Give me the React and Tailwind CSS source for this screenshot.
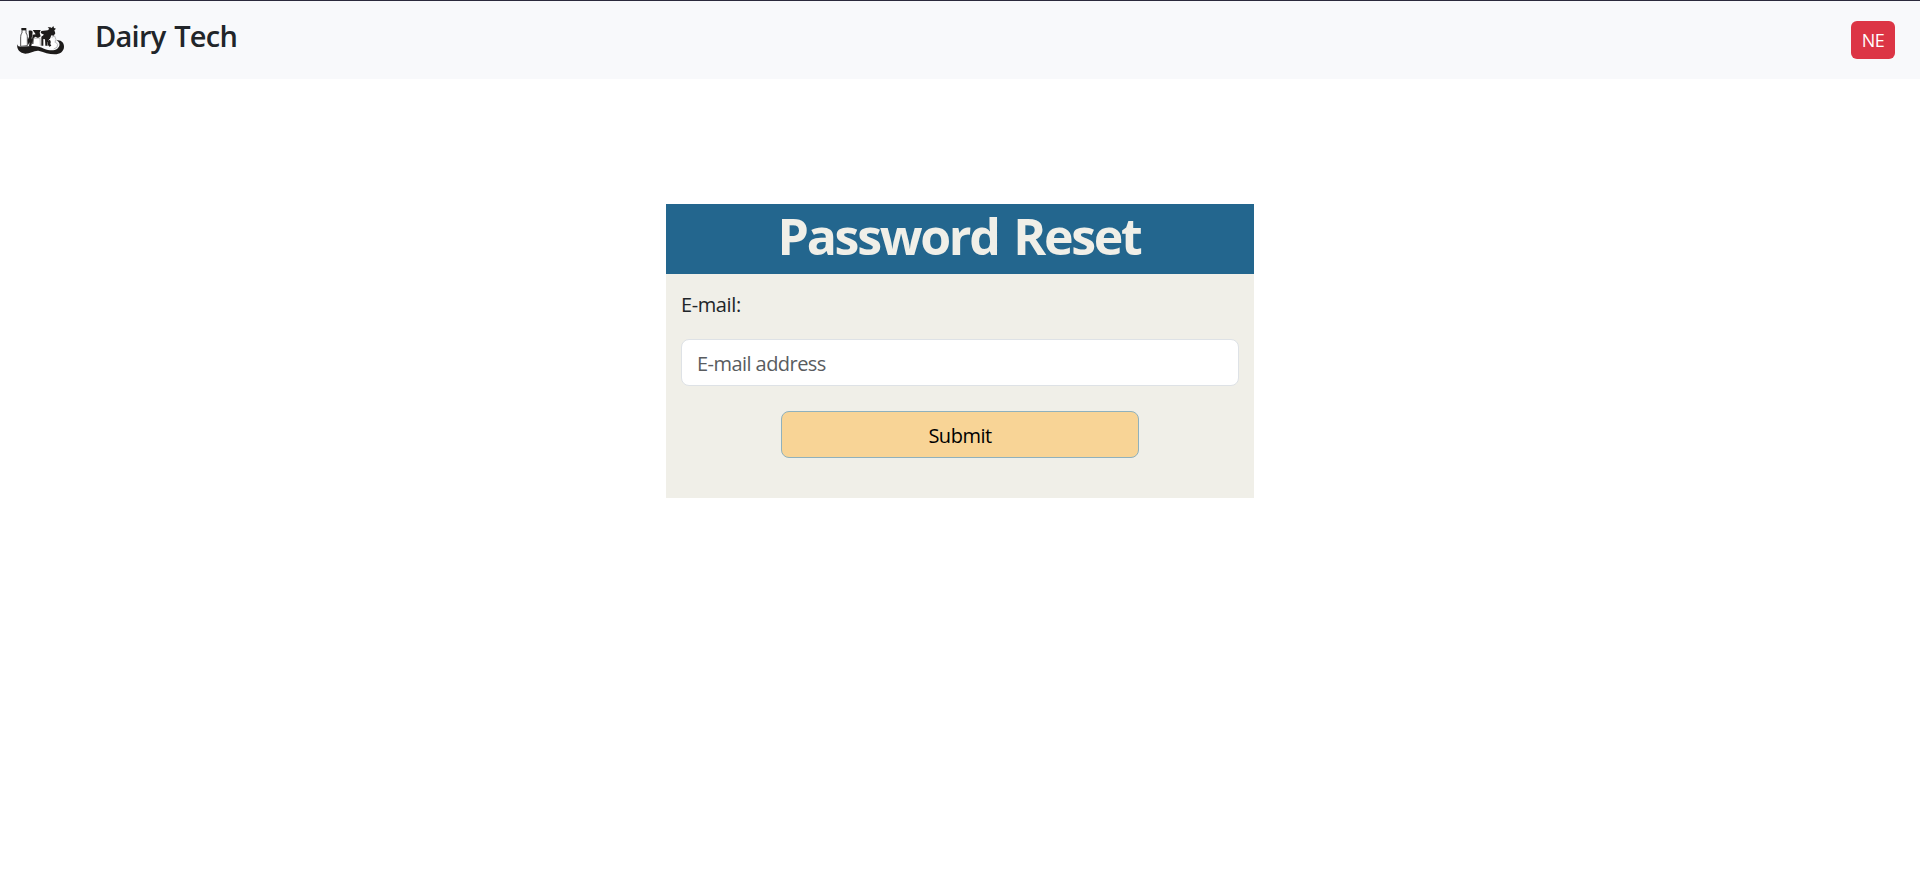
import { useState } from 'react'

function Logo() {
  return (
    <svg viewBox="0 0 162 120" className="w-[54px] h-10 shrink-0" fill="#1d1b1a">
      {/* ribbon */}
      <path d="M10 72 C10 83 24 80 42 79 C64 76 76 80 90 86 C106 92 120 93 130 86 C140 79 139 66 127 61 C141 58 151 68 150 81 C149 95 138 103 122 103 C104 103 90 97 76 93 C62 90 50 101 34 101 C18 100 7 88 10 72 Z" />
      {/* milk bottle */}
      <path d="M24 30 L36 30 L36 39 C40 44 40 48 40 54 L40 77 L20 79 L20 54 C20 46 21 42 24 39 Z" fill="#fff" stroke="#333" strokeWidth="2.5" />
      <path d="M22 24 h15 v6 h-15 Z" />
      {/* cow */}
      <path d="M48 34 L104 34 L116 58 L102 76 L56 76 Z" fill="#fff" />
      <path d="M44 32 C50 30 54 32 56 35 L55 46 L53 54 L55 62 L52 78 L45 78 L47 66 L43 75 L41 60 L45 50 Z" />
      <path d="M56 30 L80 30 L77 38 L80 49 L72 54 L64 50 L59 55 L58 72 L55 72 L54 58 L56 44 L65 43 Z" />
      <path d="M82 33 L101 31 L106 27 L101 22 L109 22 L113 24 L118 18 L120 24 L126 26 L121 31 L124 40 L119 47 L112 46 L109 54 L104 64 L101 67 L102 77 L94 77 L93 58 L88 57 L88 77 L82 77 L82 50 L90 44 L80 39 Z" />
      <path d="M58 55 L78 54 L79 77" fill="none" stroke="#777" strokeWidth="1.5" />
      {/* calf */}
      <path d="M106 58 C117 52 122 60 119 66 C128 72 132 80 120 89 L104 82 C98 76 101 64 106 58 Z" fill="#fff" />
      <path d="M104 61 C109 58 112 65 109 72 L112 77 L106 80 C100 75 99 66 104 61 Z" />
      <path d="M113 52 L122 48 L126 59 L123 67 M124 66 L131 73 L129 82 L119 87" fill="none" stroke="#999" strokeWidth="2" />
    </svg>
  )
}

export default function App() {
  const [email, setEmail] = useState('')

  return (
    <div className="min-h-screen bg-white font-['Open_Sans',sans-serif] text-[#212529]">
      <nav className="flex h-[79px] items-start justify-between border-t border-[#2b2a3c] bg-[#f8f9fb] pl-3.5 pr-[25px]">
        <div className="flex items-start">
          <div className="pt-[19px]">
            <Logo />
          </div>
          <h1 className="ml-[27px] mt-[17px] text-[29px] leading-9 font-semibold tracking-[-0.75px] [word-spacing:2px]">Dairy Tech</h1>
        </div>
        <button className="mt-5 flex h-[38px] w-11 items-center justify-center rounded-md bg-[#dc3545] text-[18px] text-white tracking-[-0.5px]">
          NE
        </button>
      </nav>

      <main className="mx-auto mt-[125px] h-[294px] w-[588px] bg-[#f0efe8]">
        <h2 className="flex h-[70px] justify-center bg-[#23668e] pr-0.5 text-[50px] leading-[64px] font-bold tracking-[-2.3px] [word-spacing:4px] text-[#f0efe8]">
          Password Reset
        </h2>
        <form className="flex flex-col px-[15px]" onSubmit={(e) => e.preventDefault()}>
          <label htmlFor="email" className="mt-4 text-[20px] leading-[30px] tracking-[-0.4px]">
            E-mail:
          </label>
          <input
            id="email"
            type="email"
            placeholder="E-mail address"
            value={email}
            onChange={(e) => setEmail(e.target.value)}
            className="mt-[19px] h-[47px] rounded-lg border border-[#dee2e6] bg-white px-[15px] pt-0.5 text-[20px] tracking-[-0.55px] placeholder:text-[#595c5f]"
          />
          <button
            type="submit"
            className="mt-[25px] h-[47px] w-[358px] self-center rounded-lg border border-[#8fb1bd] bg-[#f8d496] pt-0.5 text-[20px] tracking-[-0.5px] text-black"
          >
            Submit
          </button>
        </form>
      </main>
    </div>
  )
}
